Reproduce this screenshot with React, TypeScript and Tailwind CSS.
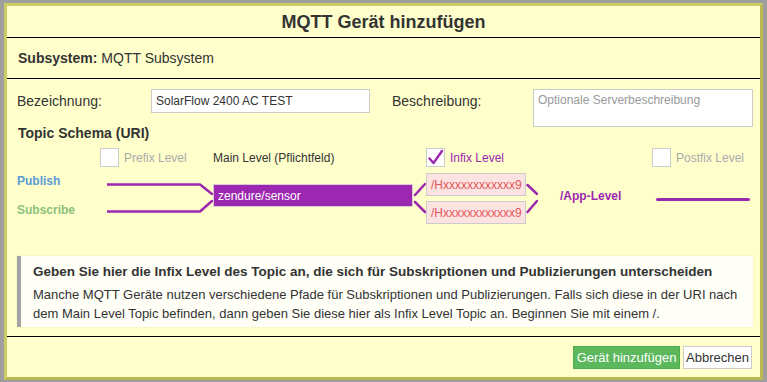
import { FC } from "react";

const purple = "#9c27b0";

const Checkbox: FC<{ checked?: boolean }> = ({ checked }) => (
  <div className="w-[19px] h-[19px] bg-white border border-[#cccccc] flex items-center justify-center shrink-0">
    {checked && (
      <svg width="17" height="17" viewBox="0 0 17 17">
        <path d="M2.5 9.5 L6.5 14 L15 2" fill="none" stroke={purple} strokeWidth="2.4" strokeLinecap="round" strokeLinejoin="round" />
      </svg>
    )}
  </div>
);

const App: FC = () => {
  return (
    <div
      className="w-[767px] h-[382px] bg-[#9e9e9e] pt-[3px] pl-[4px] overflow-hidden text-[#333333]"
      style={{ fontFamily: '"Liberation Sans", Arial, sans-serif' }}
    >
      <div className="w-[759px] h-[377px] bg-[#ffffcc] border-[3px] border-[#cccc66] border-r-[#baba55] border-b-[#baba55] flex flex-col">
        <div className="h-[32px] border-b border-black flex items-center justify-center">
          <h1 className="text-[18px] font-bold leading-[20px] mt-[1px]">MQTT Gerät hinzufügen</h1>
        </div>
        <div className="h-[41px] border-b border-black flex items-center pl-[11px] text-[14px]">
          <span className="font-bold">Subsystem:</span>
          <span className="ml-[4px]">MQTT Subsystem</span>
        </div>

        <div className="px-[10px] pt-[10px] flex-1">
          <div className="flex items-start">
            <div className="flex flex-col">
              <div className="flex items-center h-[24px]">
                <label className="w-[134px] text-[14px]">Bezeichnung:</label>
                <div className="w-[219px] h-[24px] bg-white border border-[#cccccc] flex items-center pl-[4px] text-[12px] text-[#333]">
                  SolarFlow 2400 AC TEST
                </div>
              </div>
              <div className="mt-[12px] text-[14px] font-bold leading-[16px] pl-[1px]">Topic Schema (URI)</div>
            </div>
            <div className="flex items-start ml-[22px]">
              <label className="w-[141px] text-[14px] leading-[24px]">Beschreibung:</label>
              <div className="w-[220px] h-[38px] bg-white border border-[#cccccc] pl-[4px] pt-[3px] text-[12px] text-[#999999] leading-[14px]">
                Optionale Serverbeschreibung
              </div>
            </div>
          </div>

          <div className="flex items-center mt-[7px] ml-[83px] text-[12px]">
            <div className="w-[113px] flex items-center gap-[5px] text-[#aaaaaa]">
              <Checkbox />
              <span>Prefix Level</span>
            </div>
            <div className="w-[213px]">Main Level (Pflichtfeld)</div>
            <div className="w-[226px] flex items-center gap-[5px]" style={{ color: purple }}>
              <Checkbox checked />
              <span>Infix Level</span>
            </div>
            <div className="flex items-center gap-[5px] text-[#aaaaaa]">
              <Checkbox />
              <span>Postfix Level</span>
            </div>
          </div>

          <div className="flex items-start h-[54px] mt-[5px] text-[12px]">
            <div className="w-[90px] flex flex-col font-bold leading-[16px]">
              <span className="mt-[1px] text-[#5b9bd5]">Publish</span>
              <span className="mt-[13px] text-[#8cc17c]">Subscribe</span>
            </div>
            <svg width="106" height="54" viewBox="0 0 106 54" className="shrink-0">
              <path d="M0 12.5 H93 L105 22" fill="none" stroke={purple} strokeWidth="2.5" strokeLinecap="round" strokeLinejoin="round" />
              <path d="M0 39.5 H93 L105 29" fill="none" stroke={purple} strokeWidth="2.5" strokeLinecap="round" strokeLinejoin="round" />
            </svg>
            <div className="w-[200px] h-[23px] mt-[12px] flex items-center pl-[4px] text-white border border-[#d8c8d8]" style={{ background: purple }}>
              zendure/sensor
            </div>
            <svg width="13" height="54" viewBox="0 0 13 54" className="shrink-0">
              <path d="M2 23 L12 12" fill="none" stroke={purple} strokeWidth="2.5" strokeLinecap="round" />
              <path d="M2 30 L12 40" fill="none" stroke={purple} strokeWidth="2.5" strokeLinecap="round" />
            </svg>
            <div className="w-[100px] flex flex-col gap-[5px] mt-[1px]">
              <div className="h-[23px] bg-[#fbe3e2] border border-[#cccccc] flex items-center pl-[4px] text-[#e2585b]">/Hxxxxxxxxxxxx9</div>
              <div className="h-[23px] bg-[#fbe3e2] border border-[#cccccc] flex items-center pl-[4px] text-[#e2585b]">/Hxxxxxxxxxxxx9</div>
            </div>
            <svg width="12" height="54" viewBox="0 0 12 54" className="shrink-0">
              <path d="M1.5 13 L11 22" fill="none" stroke={purple} strokeWidth="2.5" strokeLinecap="round" />
              <path d="M1.5 40 L11 29" fill="none" stroke={purple} strokeWidth="2.5" strokeLinecap="round" />
            </svg>
            <div className="w-[96px] ml-[22px] mt-[16px] font-bold leading-[16px]" style={{ color: purple }}>
              /App-Level
            </div>
            <div className="w-[94px] h-[3px] mt-[26px] rounded-full" style={{ background: purple }} />
          </div>

          <div className="mt-[30px] w-[736px] h-[71px] bg-[#fffff7] border-l-[4px] border-l-[#a3a3a3] shadow-[0_0_1px_rgba(0,0,0,0.15)] pl-[12px] pt-[7px] pb-[4px] text-[13px]">
            <div className="font-bold leading-[18px] text-[13.5px]">
              Geben Sie hier die Infix Level des Topic an, die sich für Subskriptionen und Publizierungen unterscheiden
            </div>
            <p className="mt-[4px] leading-[19px]">
              Manche MQTT Geräte nutzen verschiedene Pfade für Subskriptionen und Publizierungen. Falls sich diese in der URI nach dem Main Level Topic befinden, dann geben Sie diese hier als Infix Level Topic an. Beginnen Sie mit einem /.
            </p>
          </div>
        </div>

        <div className="h-[41px] border-t border-black flex items-start justify-end pt-[9px] pr-[8px] gap-[3px] text-[13px]">
          <button className="h-[23px] w-[107px] bg-[#5cb85c] text-white border border-[#4cae4c]">Gerät hinzufügen</button>
          <button className="h-[23px] w-[69px] bg-white text-[#333] border border-[#cccccc]">Abbrechen</button>
        </div>
      </div>
    </div>
  );
};

export default App;
